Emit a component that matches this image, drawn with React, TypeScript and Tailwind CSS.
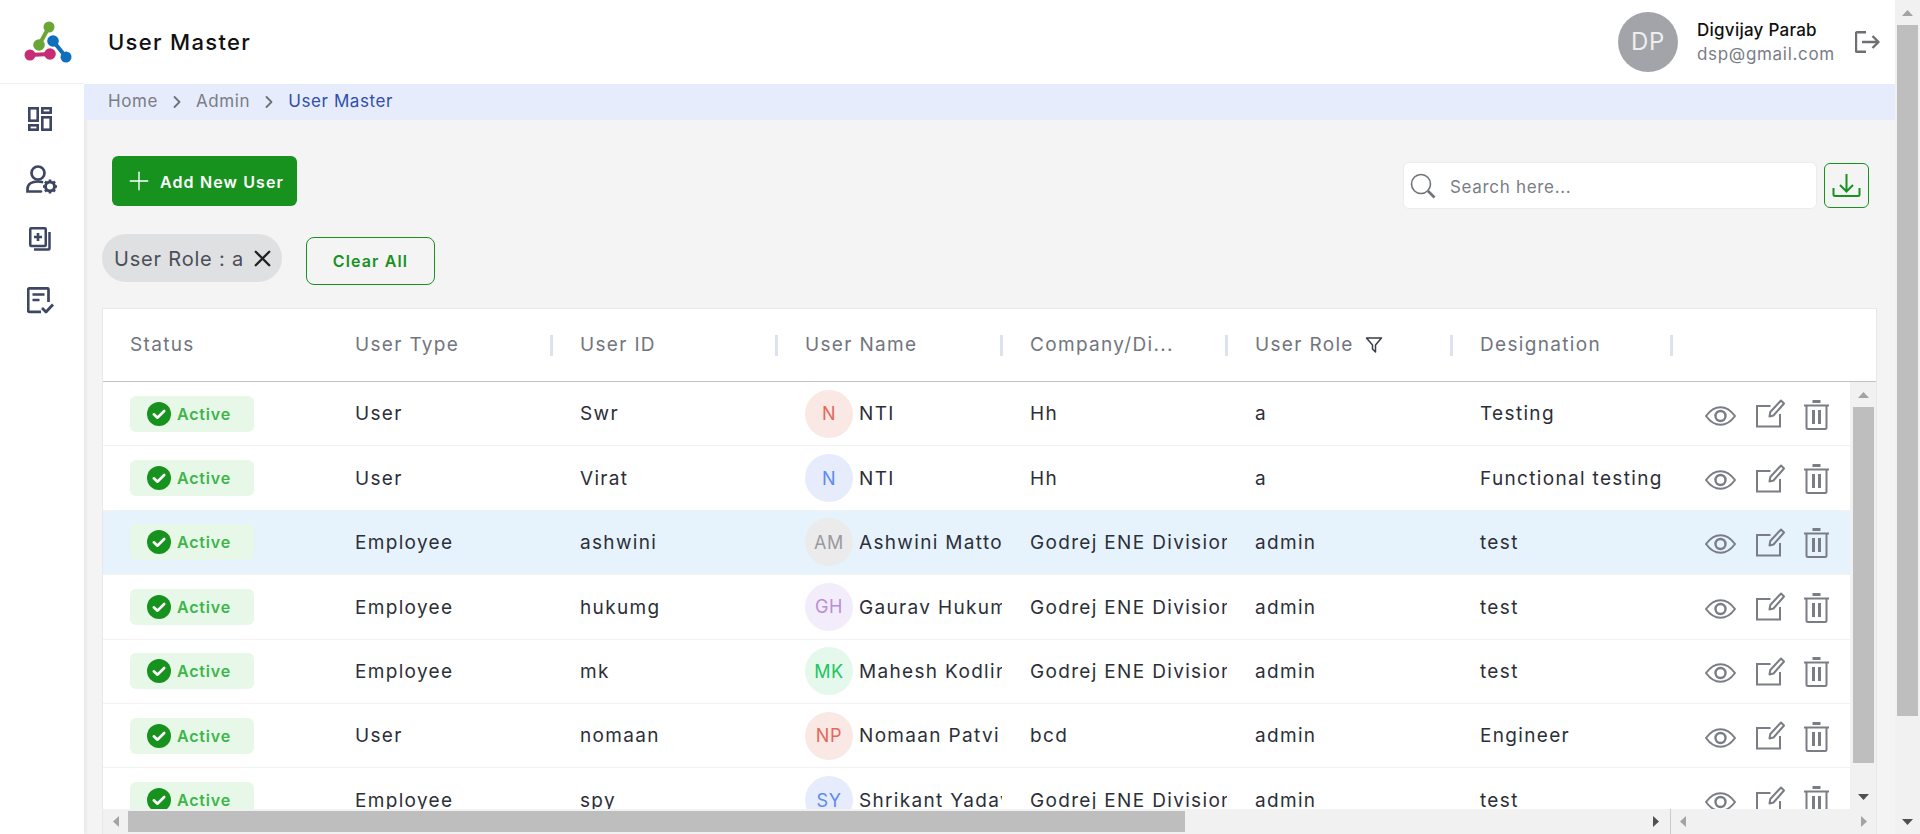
import { ChevronRight, Plus, X } from "lucide-react";

type Row = {
  type: string;
  id: string;
  initials: string;
  name: string;
  company: string;
  role: string;
  designation: string;
  avatar: string;
};

const rows: Row[] = [
  { type: "User", id: "Swr", initials: "N", name: "NTI", company: "Hh", role: "a", designation: "Testing", avatar: "bg-[#fae8e5] text-[#e3695b]" },
  { type: "User", id: "Virat", initials: "N", name: "NTI", company: "Hh", role: "a", designation: "Functional testing", avatar: "bg-[#e6ecfb] text-[#5c8bf2]" },
  { type: "Employee", id: "ashwini", initials: "AM", name: "Ashwini Mattoo", company: "Godrej ENE Division", role: "admin", designation: "test", avatar: "bg-[#ebebeb] text-[#9a9a9e]" },
  { type: "Employee", id: "hukumg", initials: "GH", name: "Gaurav Hukumchand", company: "Godrej ENE Division", role: "admin", designation: "test", avatar: "bg-[#f3ecfb] text-[#b78fd8]" },
  { type: "Employee", id: "mk", initials: "MK", name: "Mahesh Kodlinge", company: "Godrej ENE Division", role: "admin", designation: "test", avatar: "bg-[#e4f9ec] text-[#20c45e]" },
  { type: "User", id: "nomaan", initials: "NP", name: "Nomaan Patvi", company: "bcd", role: "admin", designation: "Engineer", avatar: "bg-[#fae8e5] text-[#e3695b]" },
  { type: "Employee", id: "spy", initials: "SY", name: "Shrikant Yadav", company: "Godrej ENE Division", role: "admin", designation: "test", avatar: "bg-[#e6ecfb] text-[#5c8bf2]" },
];

const gridCols = "grid grid-cols-[224px_225px_225px_225px_225px_225px_219px_179px]";

function Logo() {
  return (
    <svg width="48" height="44" viewBox="24 20 48 44">
      <g fill="none" strokeLinecap="round">
        <path d="M49 27 L39 45" stroke="#6aa535" strokeWidth="4" />
        <path d="M30 55 L50 54" stroke="#c72d74" strokeWidth="4" />
        <path d="M53 41 L66 57" stroke="#0f6fbd" strokeWidth="4" />
      </g>
      <circle cx="49" cy="27" r="5.5" fill="#6aa535" />
      <circle cx="39" cy="45" r="5.8" fill="#6aa535" />
      <circle cx="30" cy="55" r="5.5" fill="#c72d74" />
      <circle cx="50" cy="54" r="5.8" fill="#c72d74" />
      <circle cx="53" cy="41" r="5.8" fill="#0f6fbd" />
      <circle cx="66" cy="57" r="5.5" fill="#0f6fbd" />
    </svg>
  );
}

function DashIcon() {
  return (
    <svg width="24" height="24" viewBox="0 0 24 24" fill="none" stroke="#3d4663" strokeWidth="2.6">
      <rect x="1.3" y="1.3" width="8.4" height="12.4" />
      <rect x="14.3" y="1.3" width="8.4" height="4.4" />
      <rect x="1.3" y="18.3" width="8.4" height="4.4" />
      <rect x="14.3" y="10.3" width="8.4" height="12.4" />
    </svg>
  );
}

function UserGearIcon() {
  return (
    <svg width="32" height="30" viewBox="0 0 32 30" fill="none" stroke="#3d4663" strokeWidth="2.7">
      <circle cx="12" cy="8" r="6.5" />
      <path d="M15 26.500 H1.500 V24 C1.500 19 6 16.500 12 16.500 C13.500 16.500 15 16.700 16 17" strokeLinecap="round" />
      <circle cx="24" cy="21.500" r="4.500" strokeWidth="2.900" />
      <path d="M24 14.500v2.500M24 26v2.500M17 21.500h2.500M28.500 21.500H31M19 16.500l1.800 1.800M27.200 24.700l1.800 1.800M29 16.500l-1.800 1.800M20.800 24.700L19 26.500" strokeWidth="2.600" />
    </svg>
  );
}

function AddDocIcon() {
  return (
    <svg width="22" height="24" viewBox="0 0 22 24" fill="none" stroke="#3d4663" strokeWidth="2.500" strokeLinejoin="round">
      <rect x="1.250" y="1.250" width="15.500" height="17.800" rx="1" />
      <path d="M20.500 5v16.500a1 1 0 0 1-1 1H5" />
      <path d="M9 6v8M5 10h8" strokeWidth="2.600" />
    </svg>
  );
}

function ReportIcon() {
  return (
    <svg width="27" height="27" viewBox="0 0 27 27" fill="none" stroke="#3d4663" strokeWidth="2.700" strokeLinejoin="round">
      <path d="M14 24.800H2.200a1 1 0 0 1-1-1V2.400a1 1 0 0 1 1-1h18.300a1 1 0 0 1 1 1V15" />
      <path d="M5.500 7.500h12M5.500 13h7" strokeWidth="2.400" />
      <path d="M15 21l4 4 7-7.500" strokeWidth="2.800" />
    </svg>
  );
}

function LogoutIcon() {
  return (
    <svg width="25" height="22" viewBox="0 0 25 22" fill="none" stroke="#6f6f73" strokeWidth="2.400" strokeLinejoin="round">
      <path d="M11 1.200H2a1 1 0 0 0-1 1v17.600a1 1 0 0 0 1 1h9" />
      <path d="M7 11h16.500M17.500 5l6 6-6 6" />
    </svg>
  );
}

function SearchIcon() {
  return (
    <svg width="26" height="26" viewBox="0 0 26 26" fill="none" stroke="#6f737b" strokeWidth="1.600">
      <circle cx="11" cy="11" r="9.500" />
      <path d="M18 18l6.500 6.500" strokeWidth="2.600" />
    </svg>
  );
}

function DownloadIcon() {
  return (
    <svg width="29" height="25" viewBox="0 0 29 25" fill="none" stroke="#18921f" strokeWidth="2">
      <path d="M14.500 1v17M8 12l6.500 6.500L21 12" />
      <path d="M1.500 15v6.500a1.500 1.500 0 0 0 1.500 1.500h23a1.500 1.500 0 0 0 1.500-1.500V15" />
    </svg>
  );
}

function FilterIcon() {
  return (
    <svg width="18" height="18" viewBox="0 0 18 18" fill="none" stroke="#3a3d45" strokeWidth="1.500" strokeLinejoin="round">
      <path d="M1.500 2h15L10.500 9v7L7.500 13V9z" />
    </svg>
  );
}

function CheckBadge() {
  return (
    <svg width="24" height="24" viewBox="0 0 24 24" className="shrink-0">
      <circle cx="12" cy="12" r="12" fill="#18921f" />
      <path d="M6.800 12.300l3.600 3.400 6.800-6.700" fill="none" stroke="#fff" strokeWidth="2.600" strokeLinecap="round" strokeLinejoin="round" />
    </svg>
  );
}

function EyeIcon() {
  return (
    <svg width="31" height="20" viewBox="0 0 31 20" fill="none" stroke="#7a7d85">
      <path d="M1 10C5 4.500 10 1.200 15.500 1.200S26 4.500 30 10c-4 5.500-9 8.800-14.500 8.800S5 15.500 1 10z" strokeWidth="2" />
      <circle cx="15.500" cy="10" r="5" strokeWidth="2.400" />
    </svg>
  );
}

function EditIcon() {
  return (
    <svg width="29" height="29" viewBox="0 0 29 29" fill="none" stroke="#7a7d85" strokeWidth="2">
      <path d="M14.500 7H1v20.500h23V15" />
      <path d="M13.500 17.500l.8-4.500L25 1.500 28 4.500 17.500 16.500z" strokeLinejoin="round" />
    </svg>
  );
}

function TrashIcon() {
  return (
    <svg width="25" height="30" viewBox="0 0 25 30" fill="none" stroke="#7a7d85">
      <path d="M8.500 1.500h8" strokeWidth="3" />
      <path d="M0 5.500h25" strokeWidth="2" />
      <path d="M2.500 5.500V27.500a1.500 1.500 0 0 0 1.500 1.500h17a1.500 1.500 0 0 0 1.500-1.500V5.500" strokeWidth="2" />
      <path d="M9.500 10v14M15.500 10v14" strokeWidth="3" />
    </svg>
  );
}

// triangles for the scrollbar arrows
function Arrow({ dir, dark }: { dir: "up" | "down" | "left" | "right"; dark?: boolean }) {
  const points = {
    up: "0,6 5.500,0 11,6",
    down: "0,0 11,0 5.500,6",
    left: "6,0 6,11 0,5.500",
    right: "0,0 0,11 6,5.500",
  }[dir];
  const vertical = dir === "up" || dir === "down";
  return (
    <svg width={vertical ? 11 : 6} height={vertical ? 6 : 11} className="shrink-0">
      <polygon points={points} fill={dark ? "#505050" : "#a3a3a3"} />
    </svg>
  );
}

function TableRow({ row, active }: { row: Row; active: boolean }) {
  return (
    <div className={`${gridCols} h-[64.4px] shrink-0 items-center border-b border-[#f2f2f2] text-[19px] tracking-[0.07em] text-[#2c2f38] ${active ? "bg-[#e6f3fd]" : "bg-white"}`}>
      <div className="pl-[27px]">
        <div className="flex h-[36px] w-[124px] items-center gap-[6px] rounded-[6px] bg-[#e8f8e8] pl-[17px]">
          <CheckBadge />
          <span className="text-[16px] font-semibold tracking-[0.05em] text-[#3cb64a]">Active</span>
        </div>
      </div>
      <div className="pl-[28px] pt-[2px]">{row.type}</div>
      <div className="pl-[28px] pt-[2px]">{row.id}</div>
      <div className="flex items-center gap-[6px] overflow-hidden pl-[28px] whitespace-nowrap">
        <span className={`flex h-[48px] w-[48px] shrink-0 items-center justify-center rounded-full text-[18px] tracking-[0.035em] ${row.avatar}`}>{row.initials}</span>
        <span className="pt-[2px]">{row.name}</span>
      </div>
      <div className="overflow-hidden pl-[28px] pt-[2px] whitespace-nowrap">{row.company}</div>
      <div className="pl-[28px] pt-[2px]">{row.role}</div>
      <div className="overflow-hidden pl-[28px] pt-[2px] whitespace-nowrap">{row.designation}</div>
      <div className="flex items-center pl-[34px]">
        <span className="mt-[4px] w-[51px]"><EyeIcon /></span>
        <span className="w-[48px]"><EditIcon /></span>
        <span className="mt-[2px]"><TrashIcon /></span>
      </div>
    </div>
  );
}

export default function App() {
  const headers = ["User Type", "User ID", "User Name", "Company/Di...", "User Role", "Designation"];

  return (
    <div className="flex h-screen overflow-hidden bg-[#f4f4f4] font-['Inter',sans-serif] tracking-[0.05em]">
      {/* sidebar */}
      <aside className="flex w-[84px] shrink-0 flex-col bg-white shadow-[2px_0_4px_rgba(0,0,0,0.06)]">
        <div className="flex h-[84px] items-center border-b border-[#f0f0f0] pl-[24px]">
          <Logo />
        </div>
        <nav className="flex flex-col items-center">
          <div className="mt-[23px] pr-[4px]"><DashIcon /></div>
          <div className="mt-[34px]"><UserGearIcon /></div>
          <div className="mt-[32px] pr-[4px]"><AddDocIcon /></div>
          <div className="mt-[36px] pr-[4px]"><ReportIcon /></div>
        </nav>
      </aside>

      <main className="flex min-w-0 flex-1 flex-col">
        {/* top bar */}
        <header className="flex h-[84px] shrink-0 items-center bg-white pl-[24px] pr-[15px]">
          <h1 className="text-[22px] font-medium tracking-[0.06em] text-[#111]">User Master</h1>
          <div className="ml-auto flex items-center">
            <div className="flex h-[60px] w-[60px] items-center justify-center rounded-full bg-[#a3a4a9] text-[24px] text-[#eeeeee]">DP</div>
            <div className="ml-[19px] w-[158px]">
              <div className="text-[17px] font-medium leading-[24px] tracking-[0.015em] text-[#111]">Digvijay Parab</div>
              <div className="text-[17px] leading-[24px] tracking-[0.04em] text-[#7a7d85]">dsp@gmail.com</div>
            </div>
            <LogoutIcon />
          </div>
        </header>

        {/* breadcrumb */}
        <div className="flex h-[36px] shrink-0 items-center bg-[#e6ecfb] pl-[24px] text-[17px] tracking-[0.035em] text-[#7a7d85]">
          <span>Home</span>
          <ChevronRight size={20} strokeWidth={2.2} className="mx-[9px] text-[#6f7278]" />
          <span>Admin</span>
          <ChevronRight size={20} strokeWidth={2.2} className="mx-[9px] text-[#6f7278]" />
          <span className="text-[#2f4fa8]">User Master</span>
        </div>

        {/* content */}
        <section className="flex min-h-0 flex-1 flex-col pl-[18px] pr-[18px] pt-[36px]">
          <div className="flex items-start justify-between pl-[10px] pr-[8px]">
            <button className="flex h-[50px] w-[185px] items-center rounded-[6px] bg-[#18921f] pl-[12px] text-[16px] font-semibold tracking-[0.07em] text-white">
              <Plus size={30} strokeWidth={1.1} className="mr-[6px]" />
              <span className="pt-[2px]">Add New User</span>
            </button>
            <div className="mt-[6px] flex items-start gap-[7px]">
              <div className="flex h-[47px] w-[414px] items-center rounded-[6px] border border-[#ececec] bg-white pl-[6px] text-[17px] tracking-[0.04em] text-[#7a7d85]">
                <SearchIcon />
                <span className="ml-[14px] pt-[4px]">Search here...</span>
              </div>
              <div className="mt-[1px] flex h-[45px] w-[45px] items-center justify-center rounded-[6px] border border-[#18921f]">
                <DownloadIcon />
              </div>
            </div>
          </div>

          <div className="mt-[25px] flex items-start gap-[24px]">
            <div className="flex h-[48px] w-[180px] items-center rounded-full bg-[#dfe0e2] pl-[12px] text-[20px] tracking-[0.04em] text-[#4b4f58]">
              <span className="pt-[2px]">User Role : a</span>
              <X size={27} strokeWidth={2.1} className="ml-[5px] shrink-0 text-[#222]" />
            </div>
            <button className="mt-[3px] flex h-[48px] w-[129px] items-center justify-center rounded-[8px] border border-[#18921f] text-[16px] font-semibold tracking-[0.07em] text-[#18921f]">
              Clear All
            </button>
          </div>

          {/* table */}
          <div className="mt-[23px] flex min-h-0 flex-1 flex-col overflow-hidden border border-b-0 border-[#e8e8e8] bg-white">
            <div className={`${gridCols} h-[73px] shrink-0 items-center border-b border-[#c0c0c8] text-[19px] tracking-[0.07em] text-[#72757e]`}>
              <div className="pl-[27px]">Status</div>
              {headers.map((h, i) => (
                <div key={h} className={`relative flex items-center pl-[28px] whitespace-nowrap ${i === 0 ? "" : "before:absolute before:left-[-2px] before:h-[21px] before:w-[3px] before:bg-[#dce3ef] before:content-['']"}`}>
                  {h}
                  {h === "User Role" && <span className="ml-[11px]"><FilterIcon /></span>}
                </div>
              ))}
              <div className="relative before:absolute before:left-[-1px] before:top-[-10px] before:h-[21px] before:w-[3px] before:bg-[#dce3ef] before:content-['']" />
            </div>

            <div className="flex min-h-0 flex-1">
              <div className="flex min-w-0 flex-1 flex-col overflow-hidden">
                {rows.map((r, i) => (
                  <TableRow key={r.id} row={r} active={i === 2} />
                ))}
              </div>
              {/* table vertical scrollbar */}
              <div className="flex w-[26px] shrink-0 flex-col items-center bg-[#f1f1f1]">
                <div className="flex h-[25px] items-center"><Arrow dir="up" /></div>
                <div className="h-[356px] w-[21px] bg-[#bebebe]" />
                <div className="mt-auto flex h-[25px] items-center"><Arrow dir="down" dark /></div>
              </div>
            </div>

            {/* table horizontal scrollbar */}
            <div className="flex h-[25px] shrink-0 items-center bg-[#f1f1f1]">
              <div className="flex w-[25px] justify-center"><Arrow dir="left" /></div>
              <div className="h-[21px] w-[1057px] bg-[#bebebe]" />
              <div className="ml-auto flex w-[1px] flex-1 items-center justify-end pr-[11px]"><Arrow dir="right" dark /></div>
              <div className="h-full w-[1px] bg-[#c8c8d0]" />
              <div className="flex w-[205px] items-center justify-between px-[9px]">
                <Arrow dir="left" />
                <Arrow dir="right" />
              </div>
            </div>
          </div>
        </section>
      </main>

      {/* page scrollbar */}
      <div className="flex w-[25px] shrink-0 flex-col items-center bg-[#f1f1f1]">
        <div className="flex h-[25px] items-center"><Arrow dir="up" /></div>
        <div className="h-[691px] w-[21px] bg-[#bebebe]" />
        <div className="mt-auto flex h-[25px] items-center"><Arrow dir="down" dark /></div>
      </div>
    </div>
  );
}
